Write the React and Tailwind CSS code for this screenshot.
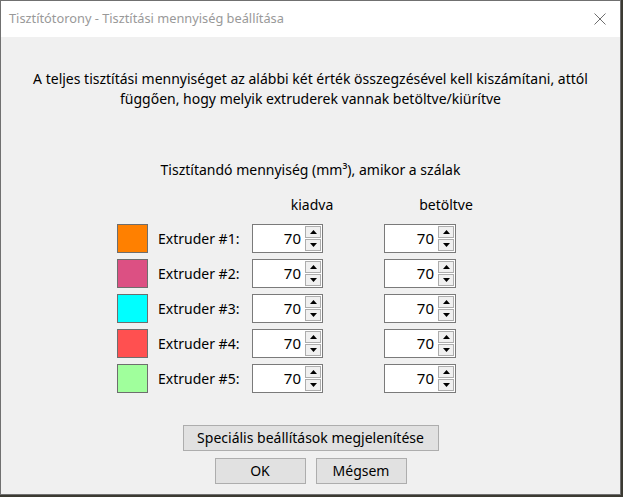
import React from 'react';

const font = { fontFamily: '"Noto Sans", "Open Sans", sans-serif' };

const extruders = [
    { id: 1, color: 'bg-[#ff8000]' },
    { id: 2, color: 'bg-[#dc5083]' },
    { id: 3, color: 'bg-[#00ffff]' },
    { id: 4, color: 'bg-[#ff5050]' },
    { id: 5, color: 'bg-[#a0ff9c]' },
];

function Spin({ value, width }) {
    return (
        <div className={`${width} flex h-[29px] border border-[#7a7a7a] bg-white`}>
            <div className="flex flex-1 items-center justify-end pr-[4px] text-[15px] leading-none text-black">{value}</div>
            <div className="flex w-[17px] flex-col gap-[1px] py-[1px] pr-[1px]">
                <button type="button" className="flex flex-1 items-center justify-center border border-[#adadad] bg-[#f0f0f0]">
                    <svg width="7" height="4" viewBox="0 0 7 4"><path d="M0 4 L3.5 0 L7 4 Z" fill="#000" /></svg>
                </button>
                <button type="button" className="flex flex-1 items-center justify-center border border-[#adadad] bg-[#f0f0f0]">
                    <svg width="7" height="4" viewBox="0 0 7 4"><path d="M0 0 L3.5 4 L7 0 Z" fill="#000" /></svg>
                </button>
            </div>
        </div>
    );
}

function WinButton({ children, width }) {
    return (
        <button type="button" className={`${width} h-[26px] border border-[#adadad] bg-[#e1e1e1] text-[14px] leading-none text-black`}>
            {children}
        </button>
    );
}

export default function App() {
    return (
        <div className="h-[497px] w-[623px] bg-[#3b3a32]" style={font}>
            <div className="flex h-[495px] w-[621px] flex-col border border-[#707070] bg-[#f0f0f0]">
                <div className="flex h-[36px] items-center justify-between bg-white pl-[8px] pr-[14px]">
                    <span className="text-[12.8px] text-[#999999]">Tisztítótorony - Tisztítási mennyiség beállítása</span>
                    <svg width="12" height="12" viewBox="0 0 12 12">
                        <path d="M0.5 0.5 L11.5 11.5 M11.5 0.5 L0.5 11.5" stroke="#6e6e6e" strokeWidth="1" />
                    </svg>
                </div>

                <div className="flex flex-col pt-[32px] text-[14px] text-black">
                    <p className="text-center leading-[20px]">
                        A teljes tisztítási mennyiséget az alábbi két érték összegzésével kell kiszámítani, attól
                        <br />
                        függően, hogy melyik extruderek vannak betöltve/kiürítve
                    </p>

                    <div className="mt-[51px] text-center leading-[20px]">Tisztítandó mennyiség (mm³), amikor a szálak</div>

                    <div className="mt-[15px] flex pl-[271px] leading-[20px]">
                        <span className="w-[80px] text-center">kiadva</span>
                        <span className="ml-[54px] w-[80px] text-center">betöltve</span>
                    </div>

                    <div className="mt-[9px] flex flex-col gap-[6px]">
                        {extruders.map((e) => (
                            <div key={e.id} className="flex items-center pl-[116px]">
                                <div className={`h-[29px] w-[31px] border border-[#6e6e6e] ${e.color}`} />
                                <span className="ml-[10px] w-[94px] leading-none">Extruder #{e.id}:</span>
                                <Spin value="70" width="w-[71px]" />
                                <div className="w-[61px]" />
                                <Spin value="70" width="w-[72px]" />
                            </div>
                        ))}
                    </div>

                    <div className="mt-[32px] flex justify-center">
                        <WinButton width="w-[256px]">Speciális beállítások megjelenítése</WinButton>
                    </div>
                    <div className="mt-[7px] flex justify-center gap-[10px]">
                        <WinButton width="w-[91px]">OK</WinButton>
                        <WinButton width="w-[91px]">Mégsem</WinButton>
                    </div>
                </div>
            </div>
        </div>
    );
}
